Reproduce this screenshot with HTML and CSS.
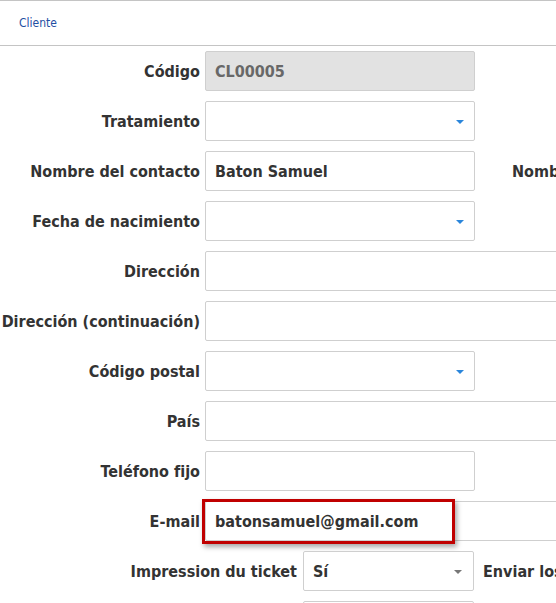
FILE: index.html
```html
<!DOCTYPE html>
<html lang="es">
<head>
    <meta charset="UTF-8">
    <title>Cliente</title>
    <link rel="stylesheet" href="styles.css">
</head>
<body>
    <div class="tabs">
        <span class="tab">Cliente</span>
    </div>
    <div class="form">
        <div class="row">
            <label class="lbl">Código</label>
            <div class="field readonly">CL00005</div>
        </div>
        <div class="row">
            <label class="lbl">Tratamiento</label>
            <div class="field combo"><span class="arrow"></span></div>
        </div>
        <div class="row">
            <label class="lbl">Nombre del contacto</label>
            <div class="field">Baton Samuel</div>
            <label class="side-lbl">Nombre de la empresa</label>
        </div>
        <div class="row">
            <label class="lbl">Fecha de nacimiento</label>
            <div class="field combo"><span class="arrow"></span></div>
        </div>
        <div class="row">
            <label class="lbl">Dirección</label>
            <div class="field wide"></div>
        </div>
        <div class="row">
            <label class="lbl">Dirección (continuación)</label>
            <div class="field wide"></div>
        </div>
        <div class="row">
            <label class="lbl">Código postal</label>
            <div class="field combo"><span class="arrow"></span></div>
        </div>
        <div class="row">
            <label class="lbl">País</label>
            <div class="field wide"></div>
        </div>
        <div class="row">
            <label class="lbl">Teléfono fijo</label>
            <div class="field"></div>
        </div>
        <div class="row">
            <label class="lbl">E-mail</label>
            <div class="field wide">batonsamuel@gmail.com</div>
            <div class="highlight"></div>
        </div>
        <div class="row row-alt">
            <label class="lbl">Impression du ticket</label>
            <div class="field combo small">Sí<span class="arrow gray"></span></div>
            <label class="side-lbl near">Enviar los tickets por e-mail</label>
        </div>
        <div class="row row-alt">
            <label class="lbl"></label>
            <div class="field small"></div>
        </div>
    </div>
</body>
</html>
```

FILE: styles.css
```css
body {
    margin: 0;
    font-family: "DejaVu Sans Condensed", "DejaVu Sans", sans-serif;
    background-color: #fff;
    color: #333;
    overflow: hidden;
    width: 556px;
    height: 603px;
}

.tabs {
    height: 44px;
    border-top: 1px solid #c4c4c4;
    border-bottom: 1px solid #c4c4c4;
    display: flex;
    align-items: center;
    padding-left: 19px;
}

.tab {
    font-size: 12px;
    color: #1f4fa3;
    font-family: "DejaVu Sans Condensed", sans-serif;
}

.form {
    padding-top: 5px;
}

.row {
    position: relative;
    display: flex;
    align-items: center;
    height: 40px;
    margin-bottom: 10px;
    white-space: nowrap;
}

.lbl {
    width: 200px;
    flex: none;
    text-align: right;
    font-weight: bold;
    font-size: 16px;
    margin-right: 5px;
}

.field {
    position: relative;
    flex: none;
    box-sizing: border-box;
    width: 270px;
    height: 40px;
    border: 1px solid #cfcfcf;
    border-radius: 2px;
    padding-left: 9px;
    display: flex;
    align-items: center;
    font-weight: bold;
    font-size: 16px;
    background-color: #fff;
}

.readonly {
    background-color: #e2e2e2;
    color: #686868;
}

.wide {
    width: 420px;
}

.arrow {
    position: absolute;
    right: 10px;
    top: 18px;
    width: 0;
    height: 0;
    border-left: 4px solid transparent;
    border-right: 4px solid transparent;
    border-top: 4px solid #2b86db;
}

.arrow.gray {
    border-top-color: #777;
    right: 11px;
}

.side-lbl {
    font-weight: bold;
    font-size: 16px;
    margin-left: 37px;
}

.side-lbl.near {
    margin-left: 9px;
}

.highlight {
    position: absolute;
    left: 202px;
    top: -2px;
    width: 247px;
    height: 39px;
    border: 3px solid #c00000;
    box-shadow: 2px 3px 5px rgba(0, 0, 0, 0.35);
}

.row-alt .lbl {
    width: 297px;
    margin-right: 6px;
}

.field.small {
    width: 171px;
}
```
